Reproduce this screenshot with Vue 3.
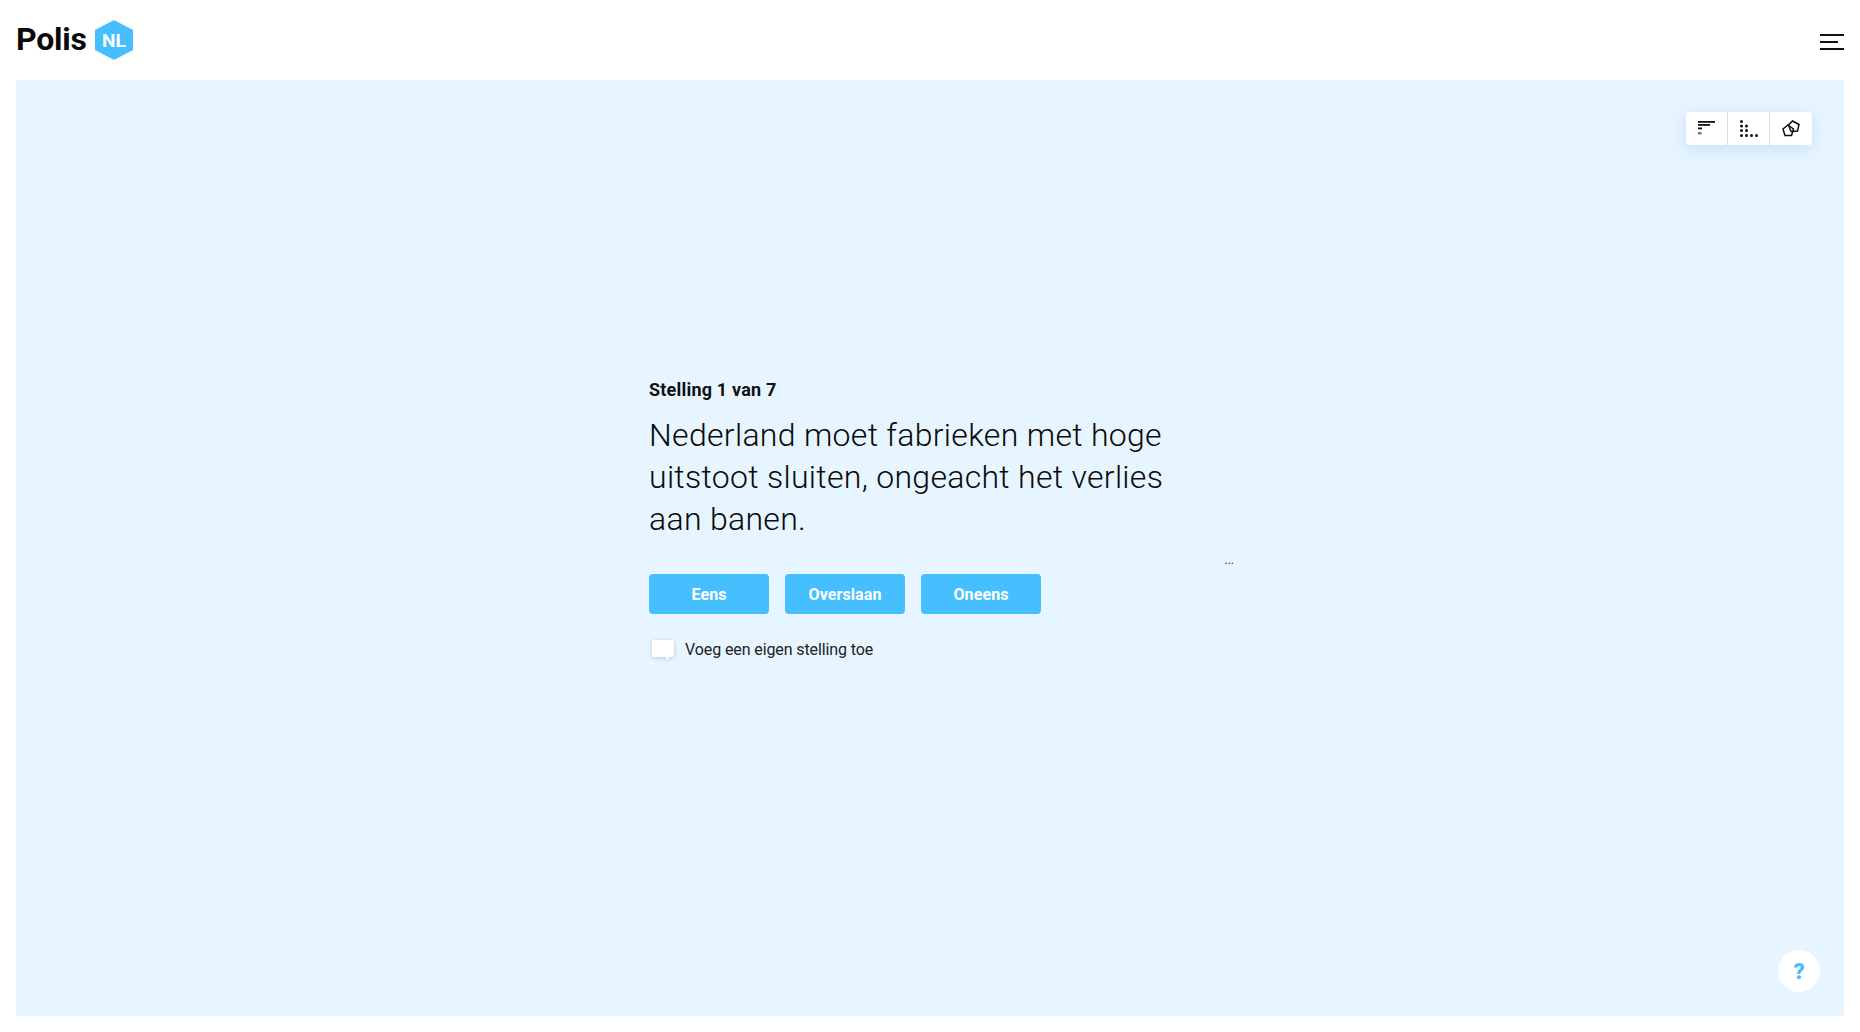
<script setup>
const answers = ['Eens', 'Overslaan', 'Oneens'];
</script>

<template>
  <div class="page">
    <header class="top">
      <div class="logo">
        <span class="logo-text">Polis</span>
        <span class="hex">
          <svg width="38" height="40" viewBox="0 0 38 40">
            <polygon points="19,0 38,10 38,30 19,40 0,30 0,10" fill="#46bfff" />
          </svg>
          <span class="hex-text">NL</span>
        </span>
      </div>
      <button class="burger" aria-label="menu">
        <span class="line"></span>
        <span class="line short"></span>
        <span class="line"></span>
      </button>
    </header>

    <main class="panel">
      <div class="tools">
        <button class="tool">
          <svg width="18" height="15" viewBox="0 0 18 15" fill="#111">
            <rect x="0" y="0" width="17" height="1.800" />
            <rect x="0" y="3" width="12" height="1.800" />
            <rect x="0" y="6.500" width="4" height="1.800" />
            <rect x="0" y="11" width="3.500" height="2.400" fill="#777" />
          </svg>
        </button>
        <button class="tool">
          <svg width="18" height="18" viewBox="0 0 18 18" fill="#111">
            <circle cx="1.500" cy="1.500" r="1.500" />
            <circle cx="1.500" cy="6" r="1.500" /><circle cx="6.500" cy="6" r="1.500" />
            <circle cx="1.500" cy="10.500" r="1.500" /><circle cx="6.500" cy="10.500" r="1.500" />
            <circle cx="1.500" cy="15.500" r="1.500" /><circle cx="6.500" cy="15.500" r="1.500" />
            <circle cx="11.500" cy="15.500" r="1.500" /><circle cx="16.500" cy="15.500" r="1.500" />
          </svg>
        </button>
        <button class="tool">
          <svg width="18" height="17" viewBox="0 0 18 17" fill="none" stroke="#111" stroke-width="1.500">
            <polygon points="10.500,1 17,4.500 15.500,11 9,11.500 6.500,5" />
            <polygon points="6,5 11.500,9 9.500,15.500 3,15.500 1,9" />
          </svg>
        </button>
      </div>

      <section class="vote">
        <div class="count">Stelling 1 van 7</div>
        <h1 class="statement">Nederland moet fabrieken met hoge uitstoot sluiten, ongeacht het verlies aan banen.</h1>
        <div class="dots">...</div>
        <div class="buttons">
          <button v-for="a in answers" :key="a" class="answer">{{ a }}</button>
        </div>
        <div class="own">
          <svg class="bubble" width="24" height="22" viewBox="0 0 24 22">
            <path d="M3 1h18a2 2 0 0 1 2 2v13a2 2 0 0 1-2 2h-3l-1 3-3-3H3a2 2 0 0 1-2-2V3a2 2 0 0 1 2-2z" fill="#fff" />
          </svg>
          <span>Voeg een eigen stelling toe</span>
        </div>
      </section>

      <button class="help">?</button>
    </main>
  </div>
</template>

<style scoped>
.page {
  height: 1032px;
  display: flex;
  flex-direction: column;
  padding: 0 16px 16px;
  box-sizing: border-box;
  background: #fff;
  font-family: Roboto, "Noto Sans", sans-serif;
  color: #111;
}

.top {
  height: 80px;
  flex: none;
  display: flex;
  align-items: center;
  justify-content: space-between;
}

.logo {
  display: flex;
  align-items: center;
  gap: 8px;
}

.logo-text {
  font-size: 32px;
  font-weight: 700;
  line-height: 36px;
  letter-spacing: -0.2px;
  margin-top: -2px;
  color: #0a0a0a;
}

.hex {
  position: relative;
  width: 38px;
  height: 40px;
  display: block;
}

.hex svg {
  display: block;
}

.hex-text {
  position: absolute;
  inset: 0;
  display: flex;
  align-items: center;
  justify-content: center;
  color: #fff;
  font-size: 19px;
  font-weight: 700;
}

.burger {
  width: 24px;
  padding: 0;
  margin-top: 4px;
  border: 0;
  background: none;
  display: flex;
  flex-direction: column;
  gap: 5px;
}

.line {
  display: block;
  width: 24px;
  height: 2px;
  background: #111;
}

.line.short {
  width: 18px;
}

.panel {
  position: relative;
  flex: 1;
  background: #e6f5ff;
  display: flex;
  flex-direction: column;
  align-items: center;
}

.tools {
  position: absolute;
  top: 32px;
  right: 32px;
  display: flex;
  background: #fff;
  border-radius: 4px;
  box-shadow: 0 4px 16px rgba(90, 130, 220, 0.2);
}

.tool {
  width: 42px;
  height: 33px;
  padding: 0;
  border: 0;
  border-left: 1px solid #dcdcdc;
  background: none;
  display: flex;
  align-items: center;
  justify-content: center;
}

.tool:first-child {
  width: 41px;
  border-left: 0;
}

.tool:last-child {
  width: 43px;
}

.vote {
  width: 600px;
  padding: 298px 0 0 19px;
  box-sizing: border-box;
}

.count {
  font-size: 18px;
  font-weight: 700;
  line-height: 24px;
  letter-spacing: 0.2px;
}

.statement {
  margin: 12px 0 0;
  width: 530px;
  font-size: 32px;
  font-weight: 300;
  line-height: 42px;
  letter-spacing: 0.3px;
  color: #0a0a0a;
}

.dots {
  margin-top: 13px;
  text-align: right;
  font-size: 12px;
  line-height: 14px;
  color: #333;
  margin-right: -4px;
}

.buttons {
  display: flex;
  gap: 16px;
  margin-top: 7px;
}

.answer {
  width: 120px;
  height: 40px;
  border: 0;
  border-radius: 4px;
  background: #46bfff;
  color: #fff;
  font-family: inherit;
  font-size: 16px;
  font-weight: 700;
  letter-spacing: 0.1px;
}

.own {
  display: flex;
  align-items: center;
  gap: 10px;
  margin-top: 24px;
  font-size: 16px;
  line-height: 24px;
  letter-spacing: -0.1px;
  color: #222;
}

.bubble {
  margin-left: 2px;
  filter: drop-shadow(0 1px 2px rgba(0, 0, 0, 0.18));
}

.help {
  position: absolute;
  right: 24px;
  bottom: 24px;
  width: 42px;
  height: 42px;
  padding: 0;
  border: 0;
  border-radius: 50%;
  background: #fff;
  color: #46bfff;
  font-family: inherit;
  font-size: 22px;
  font-weight: 900;
}
</style>
